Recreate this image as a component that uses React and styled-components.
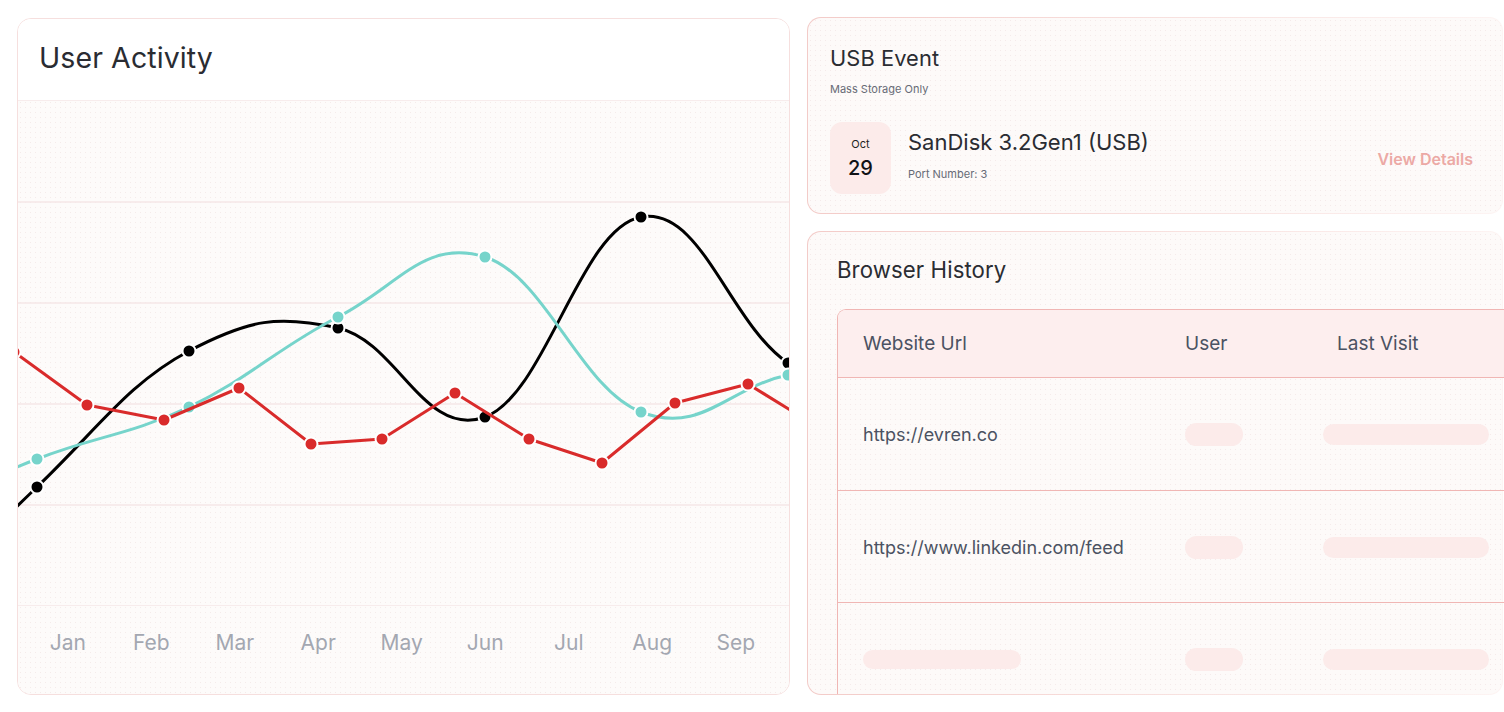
import React from 'react';
import styled, { createGlobalStyle } from 'styled-components';

const GlobalStyle = createGlobalStyle`
  html, body {
    margin: 0;
    padding: 0;
    background: #ffffff;
    overflow: hidden;
  }
  body {
    font-family: Inter, "Noto Sans", sans-serif;
    -webkit-font-smoothing: antialiased;
  }
`;

const dots = `radial-gradient(circle, rgba(226, 196, 196, 0.28) 0.6px, transparent 0.9px)`;

const Page = styled.div`
  display: grid;
  grid-template-columns: 773px 696px;
  column-gap: 17px;
  padding: 17px 0 0 17px;
  width: 1520px;
  box-sizing: border-box;
`;

const ActivityCard = styled.section`
  margin-top: 1px;
  height: 677px;
  box-sizing: border-box;
  border: 1.5px solid #f6dfde;
  border-radius: 14px;
  overflow: hidden;
  display: flex;
  flex-direction: column;
  background: #ffffff;
`;

const ActivityHeader = styled.div`
  height: 81px;
  padding: 21px 0 0 21px;
  box-sizing: border-box;
  background: #ffffff;
`;

const CardTitle = styled.h2`
  margin: 0;
  font-size: ${(p) => p.size || 28.5}px;
  line-height: 1.25;
  font-weight: ${(p) => p.weight || 500};
  color: #2a2c32;
  letter-spacing: 0.1px;
`;

const ChartArea = styled.div`
  flex: 1;
  display: flex;
  flex-direction: column;
  background-color: #fdfbfa;
  background-image: ${dots};
  background-size: 5px 5px;
`;

const ChartSvg = styled.svg`
  display: block;
  width: 772px;
  height: 506px;
`;

const MonthRow = styled.div`
  display: grid;
  grid-template-columns: repeat(9, 83.5px);
  padding: 22px 0 0 8px;
`;

const Month = styled.span`
  text-align: center;
  font-size: 21px;
  line-height: 30px;
  color: #a3a7b1;
`;

const RightColumn = styled.div`
  display: flex;
  flex-direction: column;
  gap: 17px;
`;

const SoftCard = styled.section`
  box-sizing: border-box;
  height: ${(p) => p.h}px;
  border: 1.5px solid transparent;
  border-radius: 14px;
  background:
    ${dots} padding-box,
    linear-gradient(#fdfaf9, #fdfaf9) padding-box,
    linear-gradient(90deg, #f3cbc8 0%, #f8e2e0 55%, #fdf4f3 100%) border-box;
  background-size: 5px 5px, auto, auto;
`;

const UsbCard = styled(SoftCard)`
  padding: 27px 29px 0 22px;
`;

const Subtitle = styled.p`
  margin: 10px 0 0;
  font-size: 11px;
  line-height: 14px;
  color: #676b76;
`;

const EventRow = styled.div`
  display: flex;
  align-items: center;
  margin-top: 26px;
`;

const DateBox = styled.div`
  width: 61px;
  height: 72px;
  border-radius: 12px;
  background: #fcebea;
  display: flex;
  flex-direction: column;
  align-items: center;
  justify-content: center;
`;

const DateMonth = styled.span`
  font-size: 11px;
  line-height: 14px;
  color: #1e1f23;
`;

const DateDay = styled.span`
  margin-top: 5px;
  font-size: 20px;
  line-height: 24px;
  font-weight: 500;
  color: #111216;
`;

const DeviceInfo = styled.div`
  flex: 1;
  margin-left: 17px;
  display: flex;
  flex-direction: column;
  margin-top: -6px;
`;

const DeviceName = styled.span`
  font-size: 22px;
  line-height: 26px;
  font-weight: 400;
  color: #2a2c32;
`;

const DeviceMeta = styled.span`
  margin-top: 12px;
  font-size: 11px;
  line-height: 14px;
  color: #676b76;
`;

const DetailsLink = styled.a`
  font-size: 16px;
  font-weight: 600;
  color: #eca9a5;
  text-decoration: none;
  margin-top: 2px;
`;

const HistoryCard = styled(SoftCard)`
  padding: 24px 0 0 29px;
  overflow-y: clip;
  overflow-x: visible;
`;

const Table = styled.div`
  width: 720px;
  margin-top: 25px;
  border-left: 1.5px solid #f0b6b4;
  border-top: 1.5px solid #f0b6b4;
  border-top-left-radius: 9px;
`;

const Row = styled.div`
  display: grid;
  grid-template-columns: 322px 138px 1fr;
  align-items: center;
  height: ${(p) => p.h}px;
  box-sizing: border-box;
  border-bottom: 1.5px solid #f0b6b4;
  background: ${(p) => (p.head ? '#fdeeee' : 'transparent')};
  border-top-left-radius: ${(p) => (p.head ? '8px' : '0')};
`;

const Cell = styled.div`
  padding-left: ${(p) => p.pl || 25}px;
  font-size: ${(p) => (p.head ? 19 : 18)}px;
  color: #4b5262;
  white-space: nowrap;
  margin-top: ${(p) => (p.head ? 0 : 2)}px;
`;

const Pill = styled.div`
  width: ${(p) => p.w}px;
  height: ${(p) => p.h}px;
  border-radius: 12px;
  background: #fcebea;
`;

const gridLines = [100, 202, 303, 404, 505, 606];

const series = [
  {
    color: '#000000',
    smooth: true,
    pts: [[-114, 640], [36, 487], [188, 351], [337, 328], [484, 417], [640, 217], [787, 363], [937, 420]],
  },
  {
    color: '#76d4cb',
    smooth: true,
    pts: [[-114, 524], [36, 459], [188, 407], [337, 317], [484, 257], [640, 412], [787, 375], [937, 352]],
  },
  {
    color: '#d92b2b',
    smooth: false,
    pts: [[13, 352], [86, 405], [163, 420], [238, 388], [310, 444], [381, 439], [454, 393], [528, 439], [601, 463], [674, 403], [747, 384], [820, 429]],
  },
];

function buildPath(pts, smooth, t = 0.2) {
  let d = `M${pts[0][0]},${pts[0][1]}`;
  for (let i = 0; i < pts.length - 1; i++) {
    const p1 = pts[i];
    const p2 = pts[i + 1];
    if (!smooth) {
      d += ` L${p2[0]},${p2[1]}`;
      continue;
    }
    const p0 = pts[i - 1] || p1;
    const p3 = pts[i + 2] || p2;
    const c1 = [p1[0] + (p2[0] - p0[0]) * t, p1[1] + (p2[1] - p0[1]) * t];
    const c2 = [p2[0] - (p3[0] - p1[0]) * t, p2[1] - (p3[1] - p1[1]) * t];
    d += ` C${c1[0]},${c1[1]} ${c2[0]},${c2[1]} ${p2[0]},${p2[1]}`;
  }
  return d;
}

const months = ['Jan', 'Feb', 'Mar', 'Apr', 'May', 'Jun', 'Jul', 'Aug', 'Sep'];

const history = [
  { url: 'https://evren.co' },
  { url: 'https://www.linkedin.com/feed' },
  { url: null },
];

function ActivityChart() {
  return (
    <ChartSvg viewBox="17 100 772 506" preserveAspectRatio="none">
      {gridLines.map((y) => (
        <line key={y} x1="17" x2="789" y1={y} y2={y} stroke="#f5e7e7" strokeWidth="1.5" />
      ))}
      {series.map((s) => (
        <g key={s.color}>
          <path d={buildPath(s.pts, s.smooth)} fill="none" stroke={s.color} strokeWidth="3" strokeLinejoin="round" />
          {s.pts.map(([x, y]) => (
            <circle key={x} cx={x} cy={y} r="6.5" fill={s.color} stroke="#ffffff" strokeWidth="2" />
          ))}
        </g>
      ))}
    </ChartSvg>
  );
}

export default function App() {
  return (
    <>
      <GlobalStyle />
      <Page>
        <ActivityCard>
          <ActivityHeader>
            <CardTitle weight={400}>User Activity</CardTitle>
          </ActivityHeader>
          <ChartArea>
            <ActivityChart />
            <MonthRow>
              {months.map((m) => (
                <Month key={m}>{m}</Month>
              ))}
            </MonthRow>
          </ChartArea>
        </ActivityCard>

        <RightColumn>
          <UsbCard h={197}>
            <CardTitle size={21.8} weight={400}>USB Event</CardTitle>
            <Subtitle>Mass Storage Only</Subtitle>
            <EventRow>
              <DateBox>
                <DateMonth>Oct</DateMonth>
                <DateDay>29</DateDay>
              </DateBox>
              <DeviceInfo>
                <DeviceName>SanDisk 3.2Gen1 (USB)</DeviceName>
                <DeviceMeta>Port Number: 3</DeviceMeta>
              </DeviceInfo>
              <DetailsLink href="#">View Details</DetailsLink>
            </EventRow>
          </UsbCard>

          <HistoryCard h={464}>
            <CardTitle size={22.2} weight={400}>Browser History</CardTitle>
            <Table>
              <Row head h={68}>
                <Cell head>Website Url</Cell>
                <Cell head>User</Cell>
                <Cell head pl={39}>Last Visit</Cell>
              </Row>
              {history.map((r, i) => (
                <Row key={i} h={i === 0 ? 113 : 112}>
                  <Cell>{r.url ? r.url : <Pill w={158} h={19} />}</Cell>
                  <Cell>
                    <Pill w={58} h={23} />
                  </Cell>
                  <Cell>
                    <Pill w={166} h={21} />
                  </Cell>
                </Row>
              ))}
            </Table>
          </HistoryCard>
        </RightColumn>
      </Page>
    </>
  );
}
